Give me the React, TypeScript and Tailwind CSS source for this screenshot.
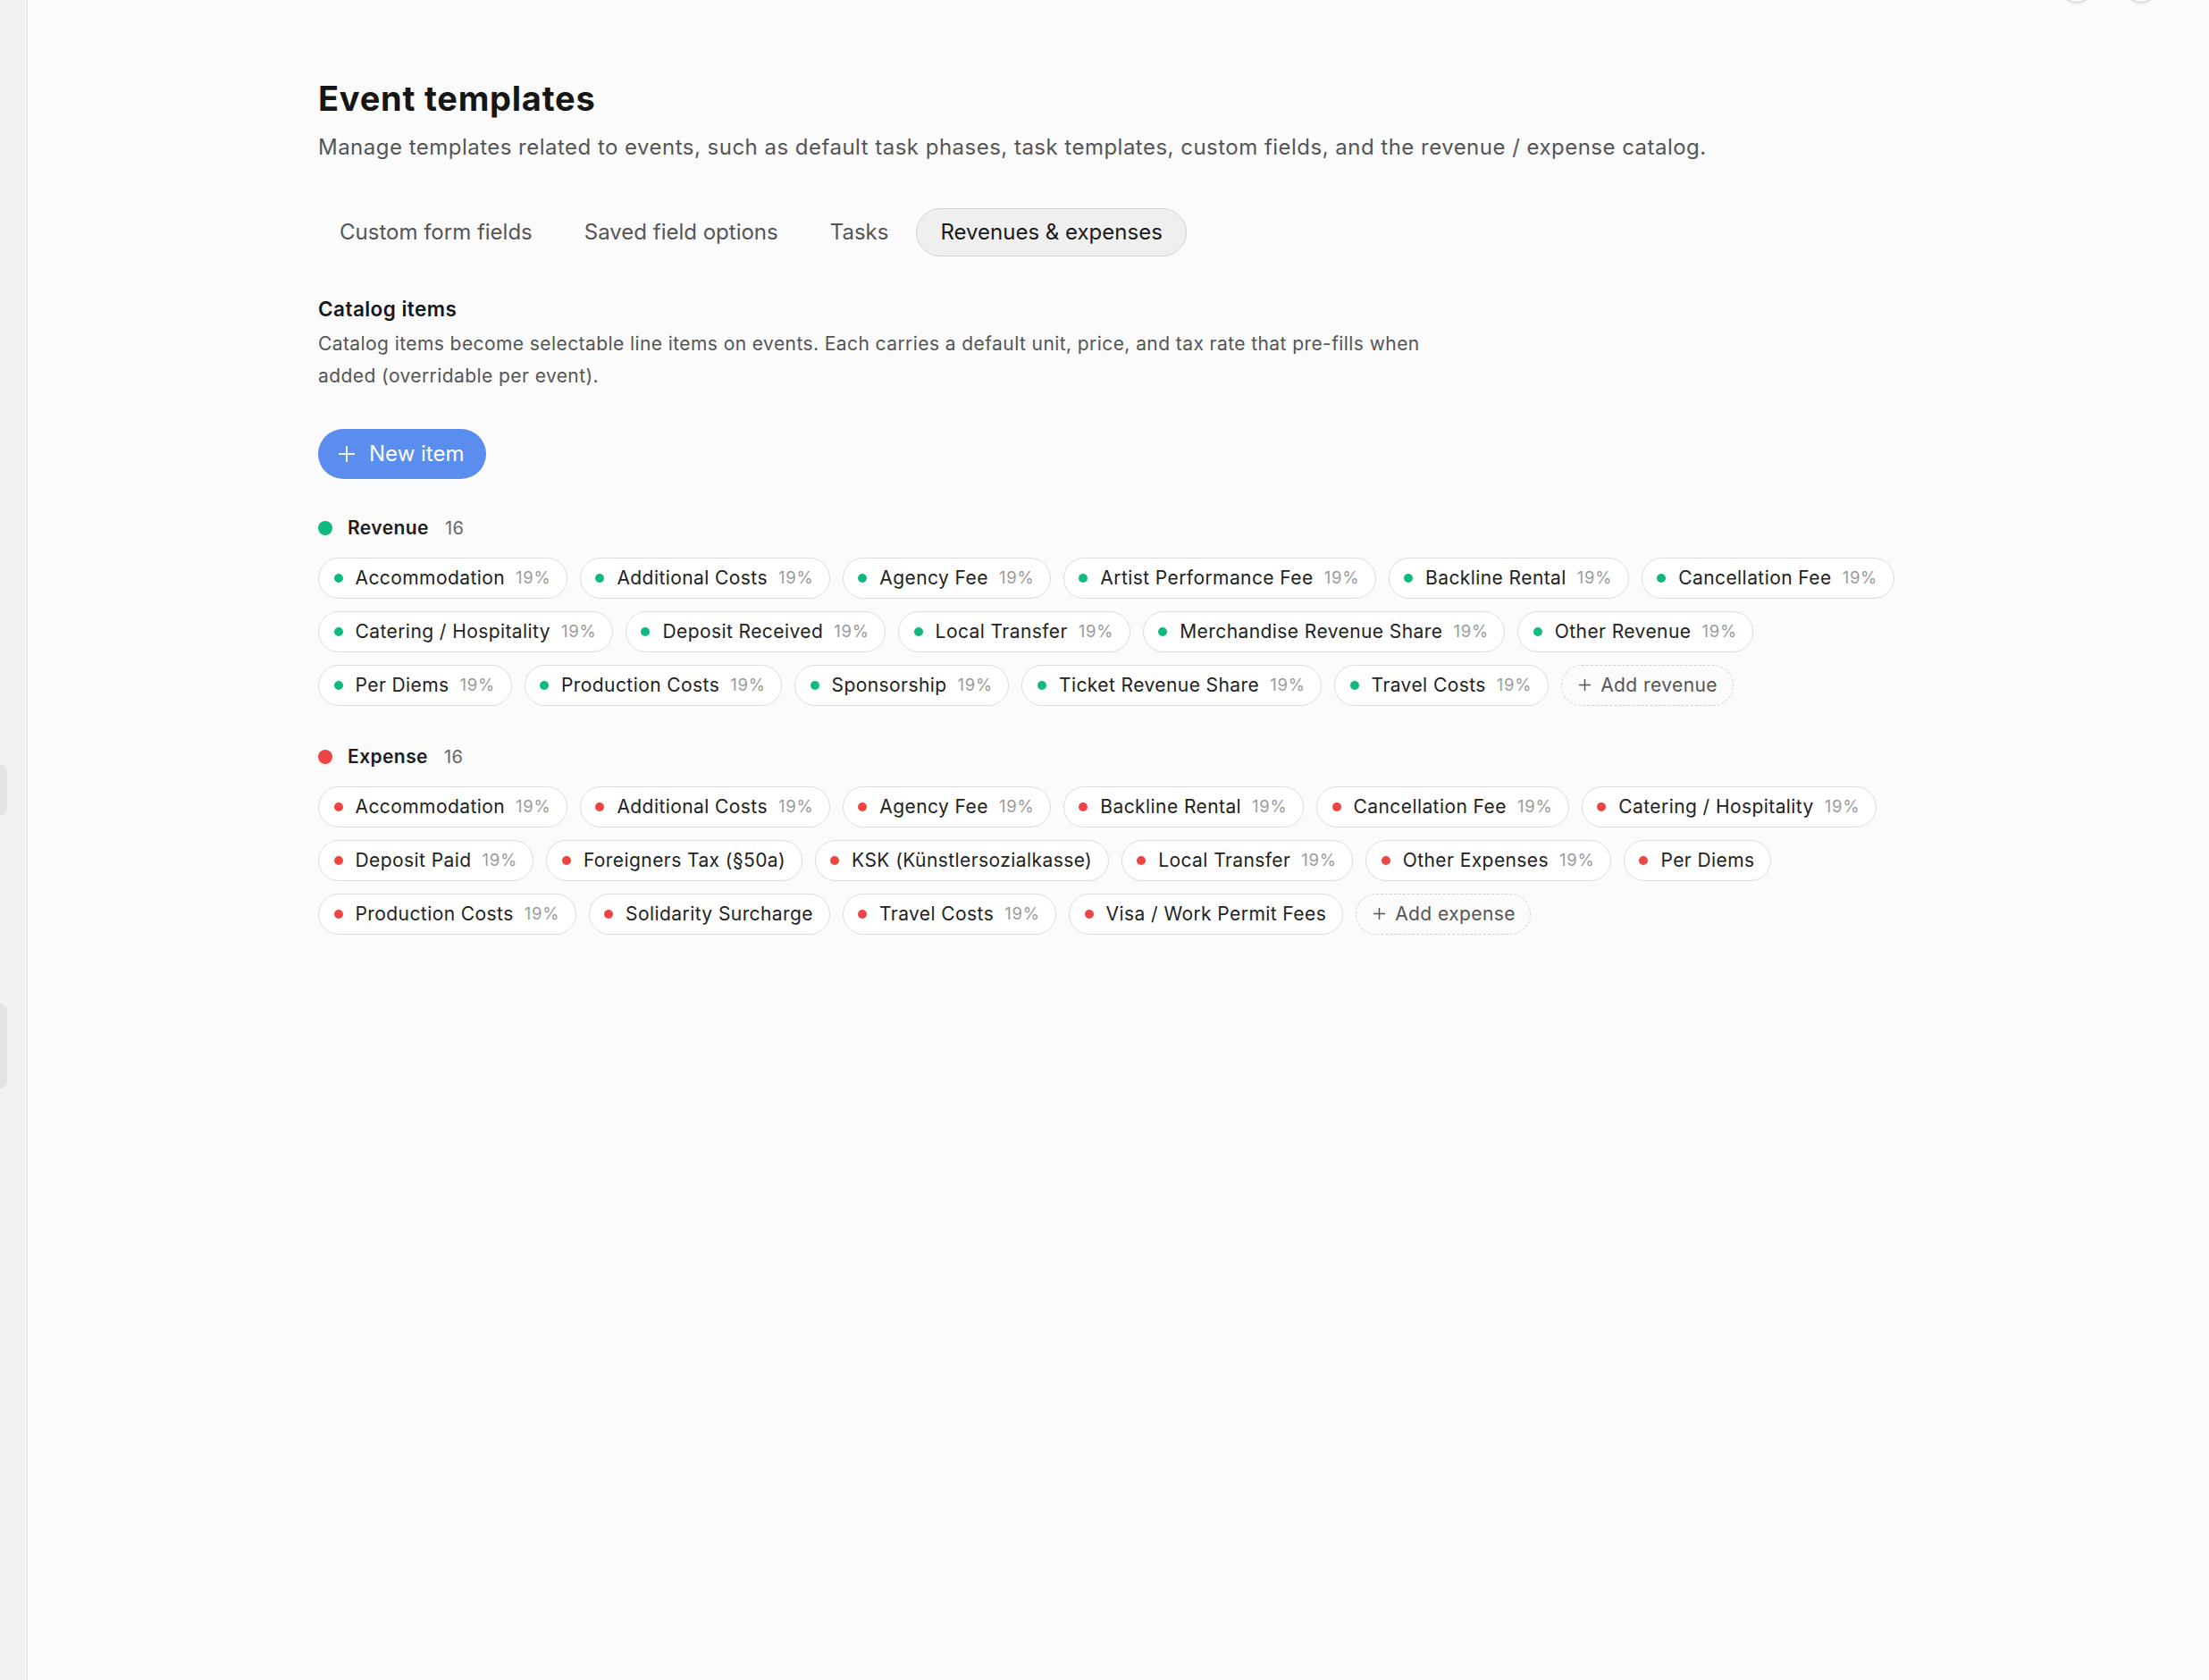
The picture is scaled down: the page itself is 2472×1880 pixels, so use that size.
type CatalogItem = { name: string; tax?: number };

// Default catalog, grouped by kind
const REVENUES: CatalogItem[] = [
  { name: 'Accommodation', tax: 19 },
  { name: 'Additional Costs', tax: 19 },
  { name: 'Agency Fee', tax: 19 },
  { name: 'Artist Performance Fee', tax: 19 },
  { name: 'Backline Rental', tax: 19 },
  { name: 'Cancellation Fee', tax: 19 },
  { name: 'Catering / Hospitality', tax: 19 },
  { name: 'Deposit Received', tax: 19 },
  { name: 'Local Transfer', tax: 19 },
  { name: 'Merchandise Revenue Share', tax: 19 },
  { name: 'Other Revenue', tax: 19 },
  { name: 'Per Diems', tax: 19 },
  { name: 'Production Costs', tax: 19 },
  { name: 'Sponsorship', tax: 19 },
  { name: 'Ticket Revenue Share', tax: 19 },
  { name: 'Travel Costs', tax: 19 },
];

const EXPENSES: CatalogItem[] = [
  { name: 'Accommodation', tax: 19 },
  { name: 'Additional Costs', tax: 19 },
  { name: 'Agency Fee', tax: 19 },
  { name: 'Backline Rental', tax: 19 },
  { name: 'Cancellation Fee', tax: 19 },
  { name: 'Catering / Hospitality', tax: 19 },
  { name: 'Deposit Paid', tax: 19 },
  { name: 'Foreigners Tax (§50a)' },
  { name: 'KSK (Künstlersozialkasse)' },
  { name: 'Local Transfer', tax: 19 },
  { name: 'Other Expenses', tax: 19 },
  { name: 'Per Diems' },
  { name: 'Production Costs', tax: 19 },
  { name: 'Solidarity Surcharge' },
  { name: 'Travel Costs', tax: 19 },
  { name: 'Visa / Work Permit Fees' },
];

const TABS = ['Custom form fields', 'Saved field options', 'Tasks', 'Revenues & expenses'];

// thin plus, drawn edge to edge
function PlusMark({ size, stroke }: { size: number; stroke: number }) {
  return (
    <svg width={size} height={size} viewBox={`0 0 ${size} ${size}`} fill="none" stroke="currentColor" strokeWidth={stroke}>
      <line x1={size / 2} y1={0} x2={size / 2} y2={size} />
      <line x1={0} y1={size / 2} x2={size} y2={size / 2} />
    </svg>
  );
}

function Chip({ item, dot }: { item: CatalogItem; dot: string }) {
  return (
    <div className="flex h-[46px] items-center rounded-full border-[1.5px] border-[#dcdcdc] bg-white pl-[16.5px] pr-[17.5px]">
      <span className={`h-[10px] w-[10px] rounded-full ${dot}`} />
      <span className="ml-[14px] text-[21px] leading-none tracking-[0.02em] text-[#222222]">{item.name}</span>
      {item.tax !== undefined && (
        <span className="ml-[12px] text-[18.5px] leading-none tracking-[0.04em] text-[#9b9b9b]">{item.tax}%</span>
      )}
    </div>
  );
}

function CatalogGroup({
  label,
  items,
  dot,
  addLabel,
}: {
  label: string;
  items: CatalogItem[];
  dot: string;
  addLabel: string;
}) {
  return (
    <section>
      <div className="flex h-[30px] items-center">
        <span className={`h-[16px] w-[16px] rounded-full ${dot}`} />
        <span className="ml-[17px] text-[21px] font-semibold tracking-[0.02em] text-[#1c1c1c]">{label}</span>
        <span className="ml-[18px] text-[20px] tracking-[0.02em] text-[#666666]">{items.length}</span>
      </div>
      <div className="mt-[18px] flex flex-wrap gap-[14px]">
        {items.map((item) => (
          <Chip key={item.name} item={item} dot={dot} />
        ))}
        <button className="flex h-[46px] items-center gap-[11px] rounded-full border-[1.5px] border-dashed border-[#d0d0d0] pl-[19.5px] pr-[16.5px] text-[21px] tracking-[0.02em] text-[#555555]">
          <PlusMark size={13} stroke={1.5} />
          {addLabel}
        </button>
      </div>
    </section>
  );
}

export default function App() {
  return (
    <div className="flex min-h-screen bg-[#fbfbfb] font-['Inter',sans-serif]">
      {/* collapsed sidebar rail */}
      <aside className="w-[31px] shrink-0 border-r-[1.5px] border-[#e2e2e2] bg-[#f2f2f2]">
        <div className="mt-[855px] h-[58px] w-[8px] rounded-r-[8px] bg-[#e3e3e3]" />
        <div className="mt-[210px] h-[95px] w-[8px] rounded-r-[8px] bg-[#e3e3e3]" />
      </aside>

      <main className="flex-1">
        {/* header actions, scrolled mostly out of view */}
        <div className="flex h-[3px] items-end justify-end gap-[34px] pr-[57px]">
          <div className="h-[38px] w-[38px] shrink-0 rounded-full border-[1.5px] border-[#d9d9d9] bg-[#fbfbfb] shadow-sm" />
          <div className="h-[38px] w-[38px] shrink-0 rounded-full border-[1.5px] border-[#d9d9d9] bg-[#fbfbfb] shadow-sm" />
        </div>

        <div className="pl-[325px] pt-[83px]">
          <div className="w-[1800px]">
            <h1 className="text-[38px] font-bold leading-[48px] tracking-[0.02em] text-[#161616]">
              Event templates
            </h1>
            <p className="mt-[14px] text-[24px] leading-[34px] tracking-[0.02em] text-[#555555]">
              Manage templates related to events, such as default task phases, task templates, custom fields, and the
              revenue / expense catalog.
            </p>

            <nav className="ml-[-3px] mt-[51px] flex gap-[4px]">
              {TABS.map((tab, i) => {
                const active = i === TABS.length - 1;
                return (
                  <button
                    key={tab}
                    className={
                      active
                        ? 'h-[54px] rounded-full border-[1.5px] border-[#d2d2d2] bg-[#efefef] px-[26px] text-[24px] text-[#1a1a1a]'
                        : 'h-[54px] rounded-full border-[1.5px] border-transparent px-[26px] text-[24px] text-[#555555]'
                    }
                  >
                    {tab}
                  </button>
                );
              })}
            </nav>

            <h2 className="mt-[43px] text-[22.5px] font-semibold leading-[31.5px] tracking-[0.02em] text-[#161616]">
              Catalog items
            </h2>
            <p className="mt-[5px] max-w-[1262px] text-[21px] leading-[36px] tracking-[0.02em] text-[#555555]">
              Catalog items become selectable line items on events. Each carries a default unit, price, and tax rate
              that pre-fills when added (overridable per event).
            </p>

            <button className="mt-[41px] flex h-[56px] items-center gap-[16px] rounded-full bg-[#5b8def] pl-[23px] pr-[25px] text-[24px] text-white">
              <PlusMark size={18} stroke={1.8} />
              New item
            </button>

            <div className="mt-[40px] flex flex-col gap-[42px]">
              <CatalogGroup label="Revenue" items={REVENUES} dot="bg-[#10b981]" addLabel="Add revenue" />
              <CatalogGroup label="Expense" items={EXPENSES} dot="bg-[#ef4444]" addLabel="Add expense" />
            </div>
          </div>
        </div>
      </main>
    </div>
  );
}
